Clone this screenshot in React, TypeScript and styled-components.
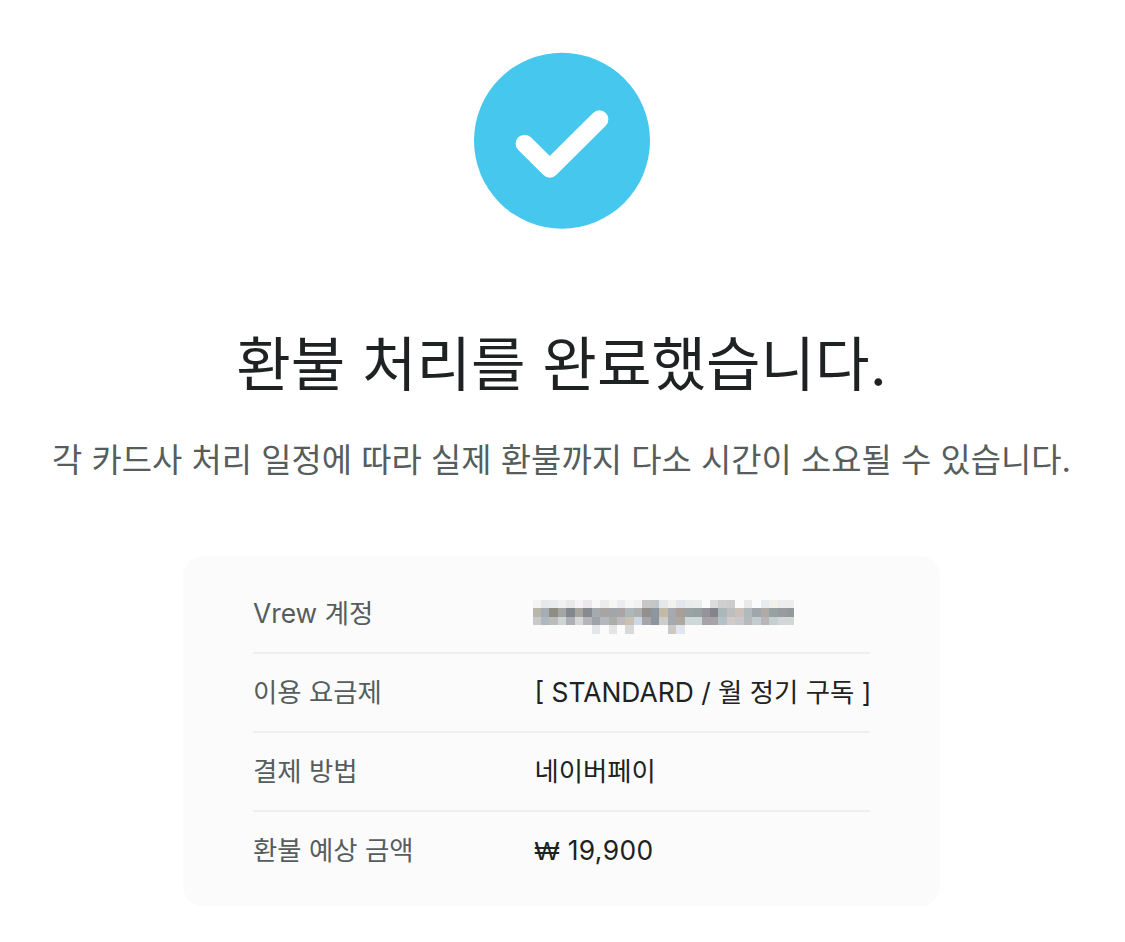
import React from 'react';
import styled, { createGlobalStyle } from 'styled-components';

const GlobalStyle = createGlobalStyle`
  * {
    box-sizing: border-box;
  }

  body {
    margin: 0;
    background-color: #ffffff;
    font-family: Inter, 'Noto Sans CJK KR', sans-serif;
  }
`;

const Page = styled.main`
  display: flex;
  flex-direction: column;
  align-items: center;
  width: 1125px;
  height: 942px;
  padding: 52px 2px 0 0;
  overflow: hidden;
`;

const CheckIcon = styled.svg`
  display: block;
  width: 178px;
  height: 178px;
  flex-shrink: 0;
`;

const Title = styled.h1`
  margin: 90px 0 0;
  font-size: 59.3px;
  font-weight: 400;
  line-height: 90px;
  white-space: nowrap;
  color: #1e2222;
`;

const Description = styled.p`
  margin: 25px 0 0;
  font-size: 32.9px;
  font-weight: 400;
  line-height: 50px;
  white-space: nowrap;
  color: #565d5d;
`;

const Card = styled.dl`
  width: 757px;
  height: 350px;
  margin: 71px 0 0;
  padding: 17px 70px;
  border-radius: 20px;
  background-color: #fbfbfb;
  flex-shrink: 0;
`;

const Row = styled.div`
  display: flex;
  align-items: center;
  height: 79px;
  font-size: 26.4px;
  line-height: 40px;
  white-space: nowrap;

  & + & {
    padding-bottom: 1px;
    border-top: 2px solid #efefef;
  }
`;

const Label = styled.dt`
  width: 281.5px;
  flex-shrink: 0;
  color: #565d5d;
`;

const Value = styled.dd<{ tracking?: string }>`
  margin: 0;
  letter-spacing: ${({ tracking }) => tracking || 'normal'};
  color: #1e2222;
`;

const WonSign = styled.span`
  font-family: 'Liberation Sans', sans-serif;
`;

const Mosaic = styled.div`
  display: grid;
  grid-template-columns: repeat(31, 1fr);
  grid-template-rows: repeat(4, 1fr);
  width: 262px;
  height: 34px;
  margin: 8px 0 0 -2px;
`;

const MosaicCell = styled.span<{ color: string }>`
  background-color: ${({ color }) => color};
`;

// The account is masked: one hex colour per block, '-' leaves the block empty
const MASKED_ACCOUNT = [
  'f4f4f4 e6e9ec e9ebed f1f1f1 e8e9ea f5f3f5 eae8ea f8f8f8 ececef f7f6f4 ecebef f6f6f6 f2f2f3 c8c6c6 c3c6c9 e3e8ec f3f1ee e3e7ed eaebeb eaedee - dcdddd cfcfcf cbcbcb - e9e9eb - e8ebed f2f1ee ecedee ecedee',
  'b9b6ae a6adb3 8f8c83 a5a5a2 838890 a9a6a0 858b90 a5aaae a8a4a4 a2a6ab a8a4a8 aeb8b8 adb0ae 92908f 8d959e c4b8a9 a5aaae aa9e98 9aa3a3 98a1a2 97939b 85848a aab8bb bcbec0 ccc0b9 b0babc a0a7ac b0aca4 98a2a4 999c9f 94999c',
  'c9c9c9 adb8bf bcbcbb cfd5d6 acafb5 d6d8d8 b6b6ba 9da3a9 b5b8bd aaada8 bcbabd c9bfb3 ccd8e6 a5a6a7 8d969f ccccca a5a9b0 afa7a2 ced8d8 ced8d8 a8a2a9 a7a3a7 b3c2c8 d3cbc7 c6c8cb b7b9bc c3ccce b6b5b8 c6cfd0 d2d6d6 d3d8d6',
  '- - - - - - - e3e6e7 - e3e6e4 - d8dad9 - - - - cac9c4 e0e6ed - - - - - - - - - - - - -',
];

const MaskedAccount: React.FC = () => (
  <Mosaic>
    {MASKED_ACCOUNT.flatMap((line, row) =>
      line.split(' ').map((cell, column) => (
        <MosaicCell key={`${row}-${column}`} color={cell === '-' ? 'transparent' : `#${cell}`} />
      ))
    )}
  </Mosaic>
);

const App: React.FC = () => {
  return (
    <>
      <GlobalStyle />
      <Page>
        <CheckIcon viewBox="0 0 178 178" fill="none">
          <circle cx="89" cy="88.7" r="88" fill="#46c7ee" />
          <path
            d="M51.6 91.7L76.8 116.7L126.4 67.3"
            stroke="#ffffff"
            strokeWidth="18"
            strokeLinecap="round"
            strokeLinejoin="round"
          />
        </CheckIcon>
        <Title>환불 처리를 완료했습니다.</Title>
        <Description>각 카드사 처리 일정에 따라 실제 환불까지 다소 시간이 소요될 수 있습니다.</Description>
        <Card>
          <Row>
            <Label>Vrew 계정</Label>
            <Value>
              <MaskedAccount />
            </Value>
          </Row>
          <Row>
            <Label>이용 요금제</Label>
            <Value>[ STANDARD / 월 정기 구독 ]</Value>
          </Row>
          <Row>
            <Label>결제 방법</Label>
            <Value>네이버페이</Value>
          </Row>
          <Row>
            <Label>환불 예상 금액</Label>
            <Value tracking="0.4px">
              <WonSign>₩</WonSign> 19,900
            </Value>
          </Row>
        </Card>
      </Page>
    </>
  );
};

export default App;
